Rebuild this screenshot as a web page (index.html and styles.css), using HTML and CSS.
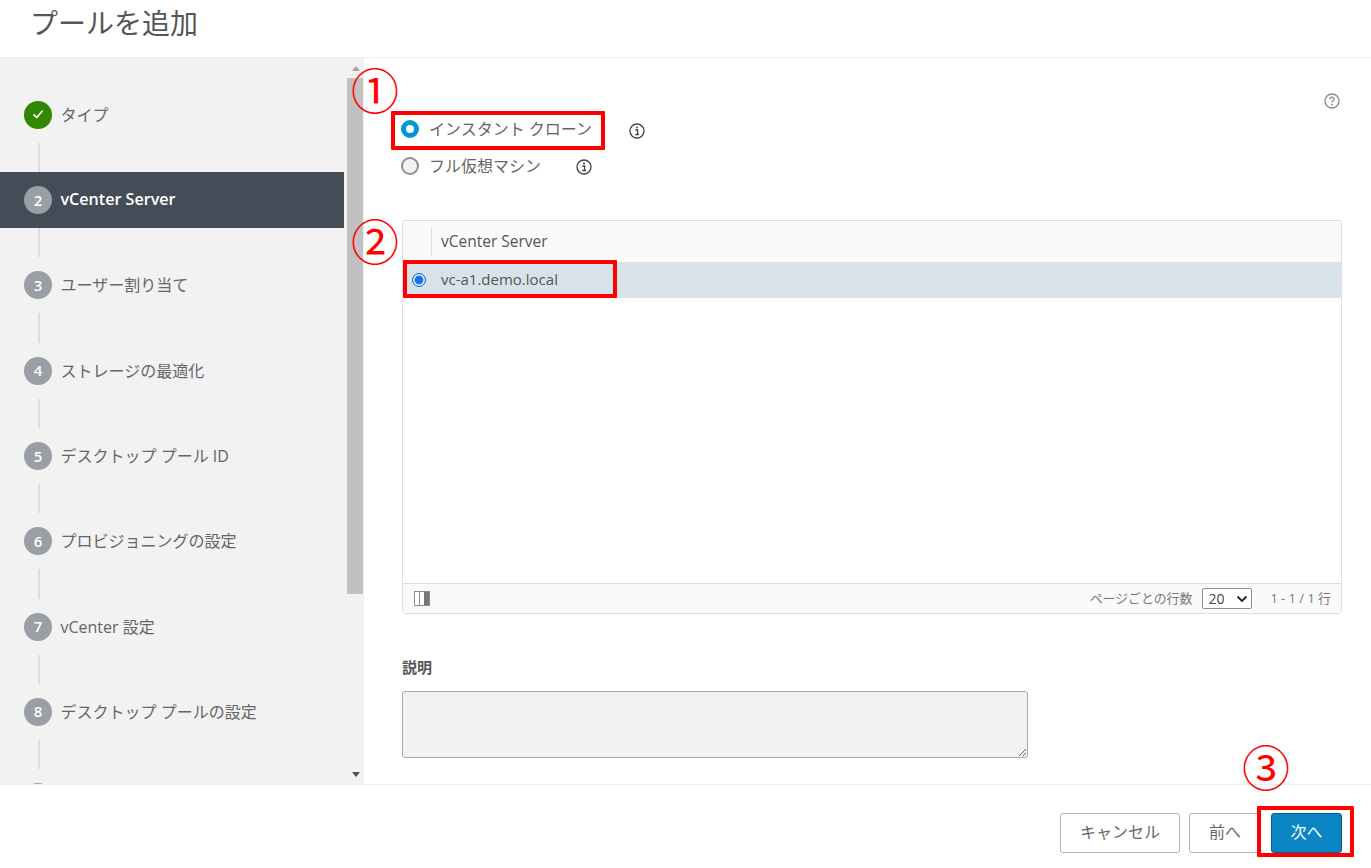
FILE: index.html
```html
<!DOCTYPE html>
<html lang="ja">
<head>
<meta charset="utf-8">
<title>プールを追加</title>
<link rel="stylesheet" href="styles.css">
</head>
<body>
<div class="page">
  <header class="head"><h1 class="title">プールを追加</h1></header>
  <div class="middle">
    <aside class="side">
      <nav class="steps">
        <div class="step"><span class="dot dot-done"><svg width="14" height="14" viewBox="0 0 14 14"><path d="M2.5 7.5 L5.8 10.5 L11.5 3.8" fill="none" stroke="#fff" stroke-width="1.7"/></svg></span><span class="step-text">タイプ</span></div>
        <div class="conn"></div>
        <div class="step step-active"><span class="dot">2</span><span class="step-text">vCenter Server</span></div>
        <div class="conn"></div>
        <div class="step"><span class="dot">3</span><span class="step-text">ユーザー割り当て</span></div>
        <div class="conn"></div>
        <div class="step"><span class="dot">4</span><span class="step-text">ストレージの最適化</span></div>
        <div class="conn"></div>
        <div class="step"><span class="dot">5</span><span class="step-text">デスクトップ プール ID</span></div>
        <div class="conn"></div>
        <div class="step"><span class="dot">6</span><span class="step-text">プロビジョニングの設定</span></div>
        <div class="conn"></div>
        <div class="step"><span class="dot">7</span><span class="step-text">vCenter 設定</span></div>
        <div class="conn"></div>
        <div class="step"><span class="dot">8</span><span class="step-text">デスクトップ プールの設定</span></div>
        <div class="conn"></div>
        <div class="step"><span class="dot"></span></div>
      </nav>
      <div class="scrollbar">
        <div class="arrow"><span class="tri tri-up"></span></div>
        <div class="thumb"></div>
        <div class="track"></div>
        <div class="arrow"><span class="tri tri-down"></span></div>
      </div>
    </aside>
    <main class="main">
      <div class="top">
        <div class="radios">
          <div class="radio-row">
            <span class="radio radio-on"></span><span class="radio-label">インスタント クローン</span>
            <svg class="info info-a" width="16" height="16" viewBox="0 0 16 16"><circle cx="8" cy="8" r="7" fill="none" stroke="#444" stroke-width="1.3"/><circle cx="8" cy="4.6" r="1" fill="#444"/><path d="M6.3 7 H8.6 V11.3 M6.2 11.5 H10" fill="none" stroke="#444" stroke-width="1.3"/></svg>
          </div>
          <div class="radio-row">
            <span class="radio radio-off"></span><span class="radio-label">フル仮想マシン</span>
            <svg class="info info-b" width="16" height="16" viewBox="0 0 16 16"><circle cx="8" cy="8" r="7" fill="none" stroke="#444" stroke-width="1.3"/><circle cx="8" cy="4.6" r="1" fill="#444"/><path d="M6.3 7 H8.6 V11.3 M6.2 11.5 H10" fill="none" stroke="#444" stroke-width="1.3"/></svg>
          </div>
        </div>
        <svg class="help" width="16" height="16" viewBox="0 0 16 16"><circle cx="8" cy="8" r="7" fill="none" stroke="#8a8f96" stroke-width="1.4"/><path d="M5.8 6.3 C5.8 3.6 10.2 3.6 10.2 6.2 C10.2 7.8 8 7.8 8 9.6" fill="none" stroke="#8a8f96" stroke-width="1.3"/><circle cx="8" cy="11.6" r=".9" fill="#8a8f96"/></svg>
      </div>
      <section class="grid">
        <div class="grid-head"><span class="grid-sel"></span><span class="grid-col">vCenter Server</span></div>
        <div class="grid-row"><span class="grid-radio"></span><span class="grid-cell">vc-a1.demo.local</span></div>
        <div class="grid-body"></div>
        <div class="grid-foot">
          <svg width="16" height="15" viewBox="0 0 16 15"><rect x=".5" y=".5" width="15" height="14" fill="#fff" stroke="#8c8c8c"/><rect x="10" y="1" width="5" height="13" fill="#777"/><path d="M5.5 1 V14" stroke="#8c8c8c"/></svg>
          <span class="foot-space"></span>
          <span class="foot-text">ページごとの行数</span>
          <div class="select"><span>20</span><svg width="12" height="8" viewBox="0 0 12 8"><path d="M1.5 1.5 L6 6 L10.5 1.5" fill="none" stroke="#222" stroke-width="1.8"/></svg></div>
          <span class="foot-text count">1 - 1 / 1 行</span>
        </div>
      </section>
      <label class="desc-label">説明</label>
      <textarea class="desc" readonly></textarea>
    </main>
  </div>
  <footer class="foot">
    <button class="btn btn-cancel">キャンセル</button>
    <button class="btn btn-prev">前へ</button>
    <button class="btn btn-next">次へ</button>
  </footer>
  <span class="mark mark-1">①</span>
  <span class="mark mark-2">②</span>
  <span class="mark mark-3">③</span>
  <div class="redbox red-1"></div>
  <div class="redbox red-2"></div>
  <div class="redbox red-3"></div>
</div>
</body>
</html>
```
FILE: styles.css
```css
* { box-sizing: border-box; }
html, body { margin: 0; padding: 0; }
body { font-family: "Open Sans", "Noto Sans CJK JP", sans-serif; color: #666; background: #fff; }
.page { position: relative; width: 1371px; height: 868px; display: flex; flex-direction: column; overflow: hidden; }

.head { height: 58px; flex: none; border-bottom: 1px solid #eee; padding-left: 30px; }
.title { margin: 0; font-size: 28px; font-weight: 400; line-height: 47px; color: #565656; }

.middle { flex: none; height: 726px; display: flex; }
.side { width: 364px; flex: none; display: flex; background: #f2f2f2; overflow: hidden; }
.steps { width: 347px; flex: none; padding: 28.7px 3px 0 0; height: 726px; overflow: hidden; }
.step { height: 56px; display: flex; align-items: center; padding-left: 24px; gap: 8.5px; font-size: 16px; color: #666; }
.step-text { padding-bottom: 2px; }
.step-active { background: #434c57; color: #fff; font-weight: 600; }
.step-active .step-text { font-size: 16.1px; }
.dot { width: 28px; height: 28px; padding-bottom: 1px; border-radius: 50%; background: #9a9ea5; color: #fff; font-size: 15px; font-weight: 600; display: flex; align-items: center; justify-content: center; flex: none; }
.dot-done { background: #318700; }
.conn { width: 2px; height: 29.33px; margin-left: 38px; background: #ddd; }

.scrollbar { width: 17px; flex: none; display: flex; flex-direction: column; }
.arrow { height: 20px; flex: none; display: flex; align-items: center; justify-content: center; }
.tri { width: 0; height: 0; border-left: 4px solid transparent; border-right: 4px solid transparent; }
.tri-up { border-bottom: 5px solid #a3a3a3; }
.tri-down { border-top: 5px solid #505050; }
.thumb { height: 516px; flex: none; margin-right: 1px; background: #c1c1c1; }
.track { flex: 1; }

.main { flex: 1; padding: 35px 29px 0 37px; overflow: hidden; }
.top { display: flex; justify-content: space-between; align-items: flex-start; }
.radios { margin-top: 17px; margin-bottom: 1px; }
.radio-row { height: 37px; display: flex; align-items: center; font-size: 16px; color: #666; }
.radio { width: 18px; height: 18px; border-radius: 50%; flex: none; margin-right: 10px; }
.radio-on { background: #fff; border: 5px solid #0095d3; }
.radio-off { background: #f2f2f2; border: 2px solid #8f8f8f; }
.radio-label { padding-bottom: 1px; }
.info { flex: none; }
.info-a { margin-left: 37px; margin-top: 4px; }
.info-b { margin-left: 35px; margin-top: 2px; }
.help { flex: none; margin-right: 2px; }

.grid { margin: 35px 0 0 1px; height: 394px; border: 1px solid #ddd; border-radius: 3px; display: flex; flex-direction: column; }
.grid-head { height: 41px; flex: none; display: flex; align-items: center; background: #fafafa; font-size: 15.5px; color: #565656; }
.grid-sel { width: 29px; height: 29px; border-right: 1px solid #ddd; flex: none; }
.grid-col { padding: 0 0 2px 9px; }
.grid-row { height: 36px; flex: none; display: flex; align-items: center; background: #d8e3e9; padding-left: 9px; gap: 15px; font-size: 15px; color: #555; }
.grid-cell { padding-bottom: 2px; }
.grid-radio { width: 14px; height: 14px; border-radius: 50%; border: 1.5px solid #1a73e8; background: #1a73e8; box-shadow: inset 0 0 0 1.5px #fff; flex: none; }
.grid-body { flex: 1; background: #fff; }
.grid-foot { height: 30px; flex: none; display: flex; align-items: center; padding: 0 10px 0 11px; background: #fafafa; border-top: 1px solid #ddd; font-size: 12.9px; color: #777; }
.foot-text { padding-bottom: 3px; }
.foot-space { flex: 1; }
.select { width: 50px; height: 21px; margin-left: 10px; border: 1px solid #8f8f8f; border-radius: 2px; background: #fff; color: #444; font-size: 14px; display: flex; align-items: center; justify-content: space-between; padding: 0 3px 0 5px; }
.count { margin-left: 18px; }

.desc-label { display: block; margin: 43px 0 0 1px; font-size: 15px; line-height: 20px; font-weight: 700; color: #565656; }
.desc { display: block; margin: 14px 0 0 1px; width: 626px; height: 67px; background: #f2f2f2; border: 1px solid #aaa; border-radius: 3px; outline: none; padding: 0; }

.foot { flex: none; height: 84px; border-top: 1px solid #eee; display: flex; justify-content: flex-end; align-items: flex-start; padding: 28px 29px 0 0; background: #fff; }
.btn { height: 40px; border: 1px solid #b3b3b3; border-radius: 3px; background: #fff; color: #666; font-family: "Open Sans", "Noto Sans CJK JP", sans-serif; font-size: 16px; padding: 0 0 4px; }
.btn-cancel { width: 120px; }
.btn-prev { width: 72px; margin-left: 9px; }
.btn-next { width: 71px; margin-left: 10px; background: #0b85c3; border-color: #00618f; color: #fff; }

.mark { position: absolute; font-family: "Noto Sans CJK JP", sans-serif; font-size: 48px; line-height: 50px; width: 50px; text-align: center; color: #f00; }
.mark-1 { left: 350px; top: 63px; }
.mark-2 { left: 350px; top: 214px; }
.mark-3 { left: 1241px; top: 740px; }
.redbox { position: absolute; border: 4px solid #f00; border-radius: 1px; }
.red-1 { left: 391px; top: 111px; width: 214px; height: 39px; }
.red-2 { left: 403px; top: 260px; width: 214px; height: 38px; }
.red-3 { left: 1257px; top: 806px; width: 97px; height: 51px; }
```
